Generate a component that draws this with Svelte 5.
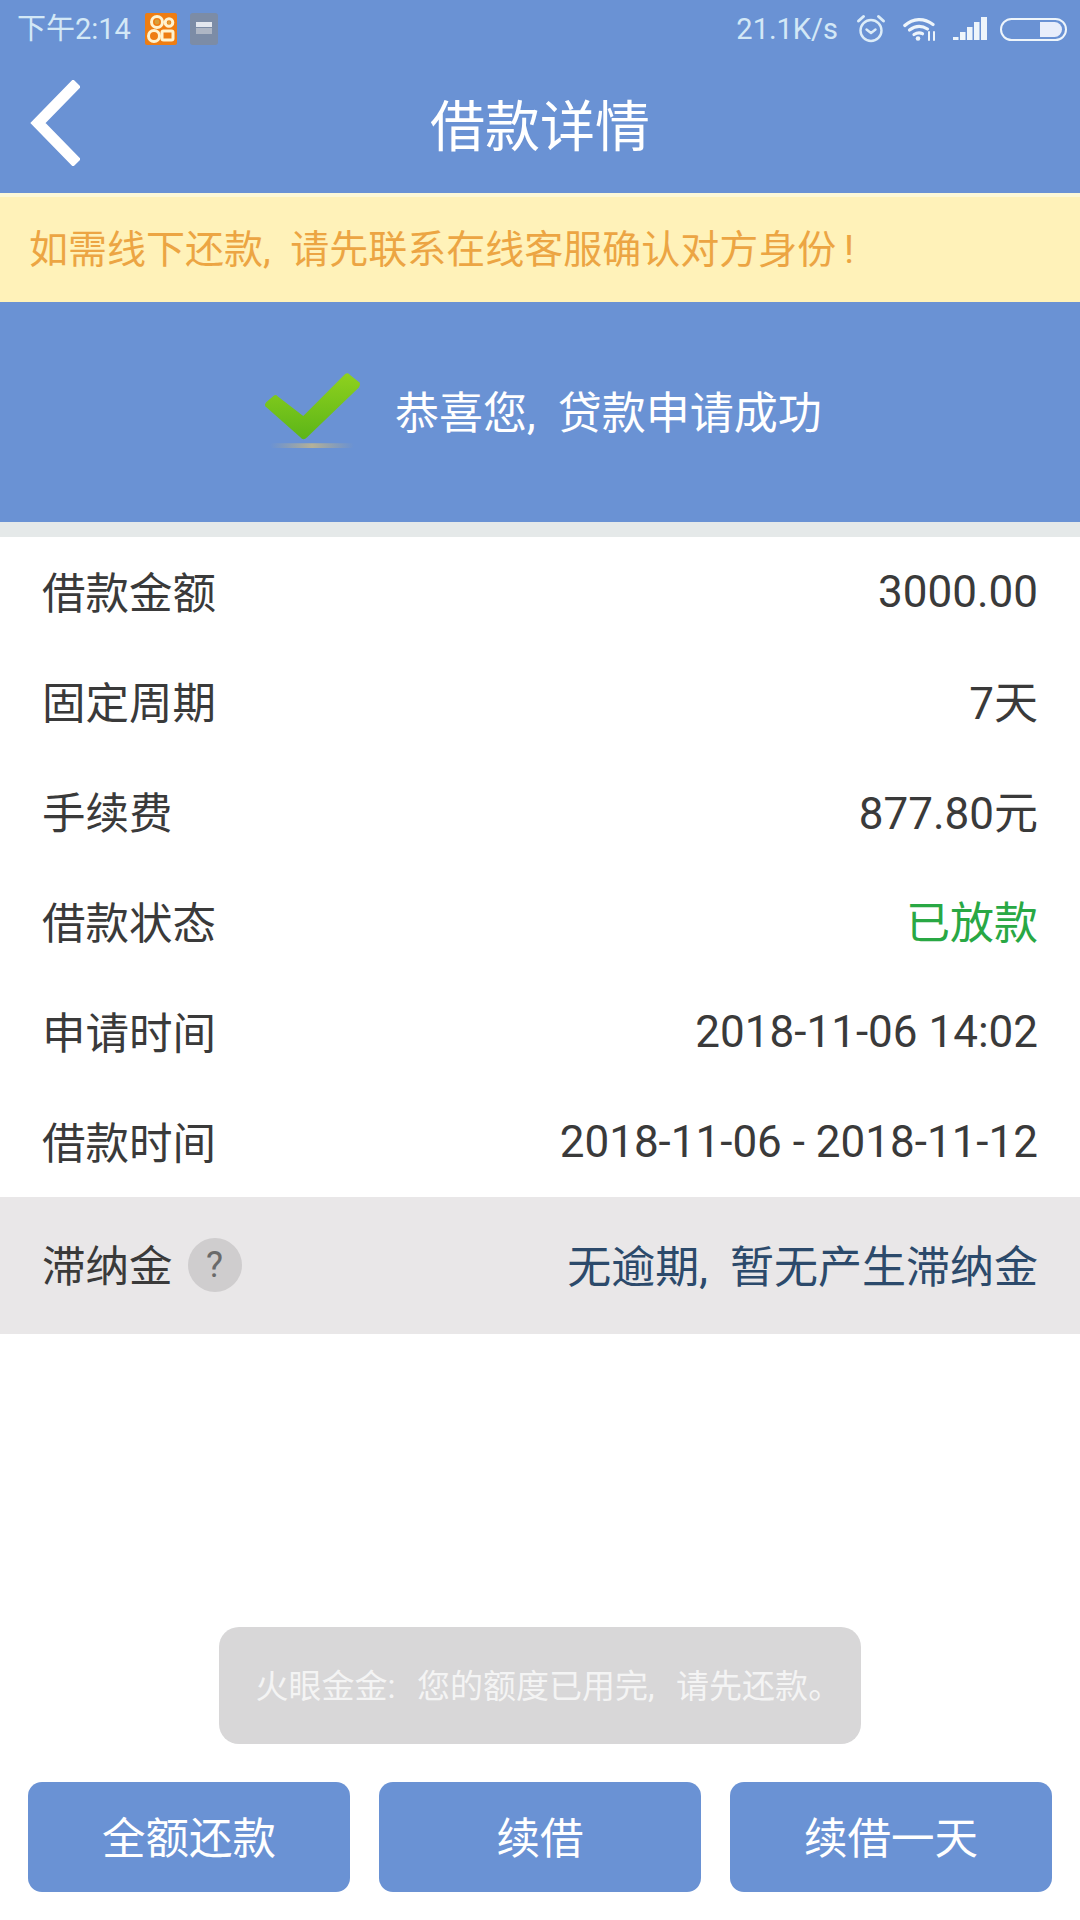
<script>
  const rows = [
    { label: '借款金额', value: '3000.00' },
    { label: '固定周期', value: '7天' },
    { label: '手续费', value: '877.80元' },
    { label: '借款状态', value: '已放款', green: true },
    { label: '申请时间', value: '2018-11-06 14:02' },
    { label: '借款时间', value: '2018-11-06 - 2018-11-12' }
  ];
  const actions = ['全额还款', '续借', '续借一天'];
  const latin = (text) => /^[\d\s:.-]+$/.test(text);
</script>

<div class="page">
  <div class="status">
    <div class="status-left">
      <span class="time">下午2:14</span>
      <svg class="app" viewBox="0 0 32 32">
        <rect width="32" height="32" rx="2" fill="#ee7d12" />
        <g fill="none" stroke="#fff3cf" stroke-width="3">
          <circle cx="12" cy="9" r="5.500" />
          <circle cx="24" cy="9.500" r="3.800" />
          <circle cx="9" cy="23" r="5.500" />
          <rect x="17" y="18" width="11" height="9" rx="1.500" />
        </g>
        <circle cx="12" cy="9" r="2.400" fill="#d9a03a" />
        <circle cx="24" cy="9.500" r="1.500" fill="#d9a03a" />
      </svg>
      <svg class="note" viewBox="0 0 28 32">
        <rect width="28" height="32" rx="3" fill="#7c8ca6" />
        <rect x="6" y="9" width="16" height="5" fill="#e3e7ee" />
        <rect x="6" y="15" width="16" height="6" fill="#aeb6c4" />
      </svg>
    </div>
    <div class="status-right">
      <span class="speed">21.1K/s</span>
      <svg class="alarm" viewBox="0 0 30 30" fill="none" stroke="#dcecf8" stroke-width="2.400" stroke-linecap="round" stroke-linejoin="round">
        <circle cx="15" cy="16.500" r="10.500" />
        <path d="M10.500 15.500 15 19l4.500-3.500" />
        <path d="M2.500 7 7.500 2.500M27.500 7l-5-4.500" stroke-width="3" />
      </svg>
      <svg class="wifi" viewBox="0 0 34 24" fill="none" stroke="#eef5fb" stroke-width="3.200" stroke-linecap="round">
        <path d="M1.800 8.500C10 1 21 .5 30 7.500" />
        <path d="M6.500 13c6-4.500 12-4.800 18-1" />
        <path d="M11 17.500c3-2 6-2.200 8.500-.8" />
        <circle cx="15" cy="21.500" r="2.300" fill="#eef5fb" stroke="none" />
        <path d="M26 15v8M31 15v8" stroke-width="2" />
      </svg>
      <svg class="signal" viewBox="0 0 34 24" fill="#eef5fb">
        <rect x="0" y="20" width="5.500" height="3" />
        <rect x="7" y="15" width="5.500" height="8" />
        <rect x="14" y="10" width="5.500" height="13" />
        <rect x="21" y="5" width="5.500" height="18" />
        <rect x="28" y="0" width="6" height="23" />
      </svg>
      <div class="battery"><span class="level"></span></div>
    </div>
  </div>

  <header class="nav">
    <svg class="back" viewBox="0 0 50 86" fill="none" stroke="#fff" stroke-width="11">
      <path d="M47 3 8 43l39 40" />
    </svg>
    <h1>借款详情</h1>
  </header>

  <div class="notice"><span class="up notice-text">如需线下还款<span class="comma">,</span>请先联系在线客服确认对方身份<span class="bang">!</span></span></div>

  <section class="hero">
    <svg class="check" viewBox="0 0 100 80">
      <defs>
        <linearGradient id="chk" x1="0" y1="0" x2="0" y2="1">
          <stop offset="0" stop-color="#8fd11e" />
          <stop offset="1" stop-color="#5cb518" />
        </linearGradient>
        <linearGradient id="shadow" x1="0" y1="0" x2="1" y2="0">
          <stop offset="0" stop-color="#a9a892" stop-opacity="0" />
          <stop offset=".5" stop-color="#b5b198" />
          <stop offset="1" stop-color="#a9a892" stop-opacity="0" />
        </linearGradient>
      </defs>
      <path d="M1 35 Q0 33 2 31 L10 24 Q12 23 14 25 L40 45 L83 2 Q86 0 88 3 L98 11 Q99 14 97 16 L44 67 Q40 71 37 67 Z" fill="url(#chk)" />
      <rect x="6" y="73" width="86" height="5" rx="2.500" fill="url(#shadow)" />
    </svg>
    <span class="hero-text">恭喜您<span class="comma">,</span>贷款申请成功</span>
  </section>

  <div class="strip"></div>

  <section class="list">
    {#each rows as row}
      <div class="row">
        <span class="up label">{row.label}</span>
        <span class:up={!latin(row.value)} class:green={row.green}>{row.value}</span>
      </div>
    {/each}
  </section>

  <div class="late">
    <div class="late-label">
      <span class="up label">滞纳金</span>
      <span class="help">?</span>
    </div>
    <span class="late-value up">无逾期<span class="comma">,</span>暂无产生滞纳金</span>
  </div>

  <div class="spacer"></div>

  <div class="actions">
    {#each actions as action}
      <button type="button"><span class="up">{action}</span></button>
    {/each}
  </div>

  <div class="toast"><span class="up">火眼金金<span class="comma wide">:</span>您的额度已用完<span class="comma wide">,</span>请先还款。</span></div>
</div>

<style>
  :global(body) {
    margin: 0;
    background: #fff;
  }

  .page {
    position: relative;
    width: 1080px;
    height: 1920px;
    display: flex;
    flex-direction: column;
    overflow: hidden;
    background: #fff;
    font-family: Roboto, "Noto Sans CJK SC", sans-serif;
    color: #3a3a3a;
    font-feature-settings: "palt" 1;
  }

  .up {
    display: inline-block;
    padding-bottom: 4px;
  }

  .label {
    font-size: 43.500px;
  }

  .comma {
    margin-right: 0.5em;
  }

  .comma.wide {
    margin-right: 0.65em;
  }

  .bang {
    margin-left: 0.2em;
  }

  .status {
    height: 58px;
    flex: none;
    display: flex;
    align-items: center;
    justify-content: space-between;
    padding: 0 13px 0 17px;
    background: #6a92d4;
    color: #d3e8f6;
  }

  .status-left,
  .status-right {
    display: flex;
    align-items: center;
  }

  .time {
    font-size: 29px;
    line-height: 32px;
    width: 128px;
    white-space: nowrap;
  }

  .app {
    width: 32px;
    height: 32px;
  }

  .note {
    width: 28px;
    height: 32px;
    margin-left: 13px;
  }

  .speed {
    font-size: 29px;
    line-height: 32px;
    white-space: nowrap;
  }

  .alarm {
    width: 30px;
    height: 30px;
    margin-left: 18px;
  }

  .wifi {
    width: 34px;
    height: 24px;
    margin-left: 17px;
  }

  .signal {
    width: 34px;
    height: 24px;
    margin-left: 16px;
  }

  .battery {
    width: 67px;
    height: 23px;
    margin-left: 13px;
    box-sizing: border-box;
    border: 2px solid #eef5fb;
    border-radius: 12px;
    display: flex;
    justify-content: flex-end;
    padding: 2px 3px 2px 0;
  }

  .level {
    width: 22px;
    background: #e9eefb;
    border-radius: 0 8px 8px 0;
  }

  .nav {
    height: 135px;
    flex: none;
    position: relative;
    display: flex;
    align-items: center;
    justify-content: center;
    background: #6a92d4;
  }

  .back {
    position: absolute;
    left: 30px;
    top: 22px;
    width: 50px;
    height: 86px;
  }

  h1 {
    margin: 0;
    padding-top: 3px;
    font-size: 55px;
    font-weight: 400;
    line-height: 70px;
    color: #fff;
  }

  .notice {
    height: 109px;
    flex: none;
    box-sizing: border-box;
    display: flex;
    align-items: center;
    padding-left: 29px;
    background: #fff2b9;
    border-top: 4px solid #fdf9d8;
    color: #eca543;
    font-size: 39px;
    white-space: nowrap;
  }

  .notice-text {
    padding-bottom: 7px;
  }

  .hero {
    height: 220px;
    flex: none;
    display: flex;
    align-items: center;
    padding-left: 264px;
    background: #6a92d4;
  }

  .check {
    width: 98px;
    height: 78px;
    margin-bottom: 2px;
  }

  .hero-text {
    margin-left: 33px;
    padding-top: 4px;
    font-size: 44px;
    line-height: 56px;
    color: #fff;
    white-space: nowrap;
  }

  .strip {
    height: 15px;
    flex: none;
    background: #e5e9e9;
  }

  .list {
    flex: none;
    height: 660px;
    display: flex;
    flex-direction: column;
  }

  .row {
    flex: 1;
    display: flex;
    align-items: center;
    justify-content: space-between;
    padding: 0 42px;
    font-size: 44px;
    white-space: nowrap;
  }

  .green {
    color: #29a844;
  }

  .late {
    height: 137px;
    flex: none;
    display: flex;
    align-items: center;
    justify-content: space-between;
    padding: 0 42px;
    background: #e9e7e8;
    font-size: 44px;
    white-space: nowrap;
  }

  .late-label {
    display: flex;
    align-items: center;
    gap: 15px;
  }

  .help {
    width: 54px;
    height: 54px;
    margin-bottom: 2px;
    border-radius: 50%;
    background: #cfcdce;
    color: #6a6a6a;
    font-size: 36px;
    display: flex;
    align-items: center;
    justify-content: center;
  }

  .late-value {
    color: #2c4a6b;
  }

  .spacer {
    flex: 1;
  }

  .actions {
    display: grid;
    grid-template-columns: repeat(3, 322px);
    justify-content: space-between;
    padding: 0 28px;
    margin-bottom: 28px;
  }

  button {
    height: 110px;
    border: 0;
    border-radius: 14px;
    background: #6a92d4;
    color: #fff;
    font-family: inherit;
    font-feature-settings: inherit;
    font-size: 43.500px;
    padding: 0;
  }

  .toast {
    position: absolute;
    left: 219px;
    top: 1627px;
    width: 642px;
    height: 117px;
    border-radius: 20px;
    background: #d8d7d8;
    color: #f4f4f4;
    font-size: 33px;
    display: flex;
    align-items: center;
    justify-content: center;
    white-space: nowrap;
  }
</style>
